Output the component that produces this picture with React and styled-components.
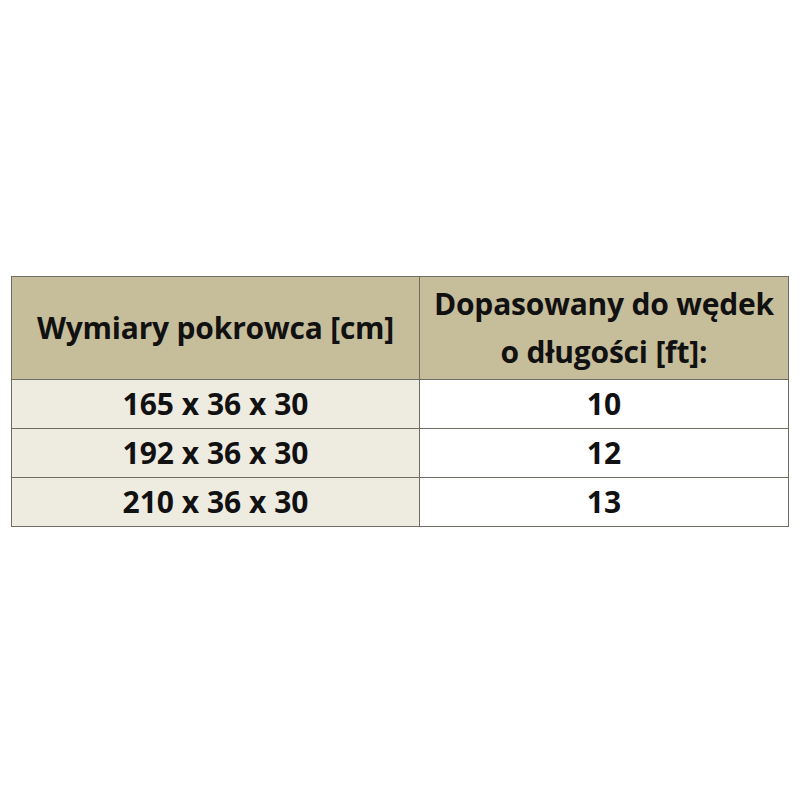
import React from "react";
import styled, { createGlobalStyle } from "styled-components";

const GlobalStyle = createGlobalStyle`
  html, body {
    margin: 0;
    padding: 0;
    background: #ffffff;
  }
`;

const rows = [
  { size: "165 x 36 x 30", ft: "10" },
  { size: "192 x 36 x 30", ft: "12" },
  { size: "210 x 36 x 30", ft: "13" },
];

export default function App() {
  return (
    <Page>
      <GlobalStyle />
      <Table>
        <colgroup>
          <col style={{ width: "408px" }} />
          <col style={{ width: "369px" }} />
        </colgroup>
        <thead>
          <tr>
            <HeadCell>Wymiary pokrowca [cm]</HeadCell>
            <HeadCell>
              Dopasowany do wędek
              <br />
              o długości [ft]:
            </HeadCell>
          </tr>
        </thead>
        <tbody>
          {rows.map((r) => (
            <tr key={r.size}>
              <Cell $tinted>{r.size}</Cell>
              <Cell>{r.ft}</Cell>
            </tr>
          ))}
        </tbody>
      </Table>
    </Page>
  );
}

const Page = styled.div`
  width: 800px;
  height: 800px;
  padding: 276px 0 0 11px;
  box-sizing: border-box;
  background: #ffffff;
`;

const Table = styled.table`
  width: 778px;
  border-collapse: collapse;
  table-layout: fixed;
  font-family: "Open Sans", "Noto Sans", sans-serif;
  font-weight: 700;
  color: #111111;
`;

const HeadCell = styled.th`
  height: 102px;
  padding: 0;
  background: #c6bd9b;
  border: 1.5px solid #6f6c62;
  font-size: 30px;
  font-weight: 700;
  line-height: 48px;
  letter-spacing: -0.2px;
  text-align: center;
  vertical-align: middle;
`;

const Cell = styled.td`
  height: 48px;
  padding: 0;
  background: ${(p) => (p.$tinted ? "#eeebe1" : "#ffffff")};
  border: 1.5px solid #6f6c62;
  font-size: 30px;
  line-height: 48px;
  text-align: center;
  vertical-align: middle;
`;
